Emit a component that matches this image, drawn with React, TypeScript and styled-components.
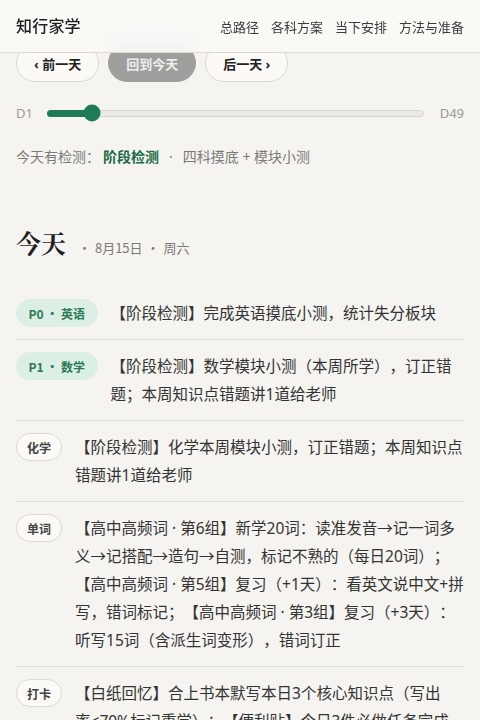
import React from 'react'
import styled, { createGlobalStyle } from 'styled-components'

const GlobalStyle = createGlobalStyle`
    * {
        box-sizing: border-box;
    }
    body {
        margin: 0;
        background: #f5f4f0;
        font-family: 'Noto Sans', 'Noto Sans CJK SC', sans-serif;
        color: #2b2b2b;
        text-spacing-trim: space-all;
    }
`

const NAV = ['总路径', '各科方案', '当下安排', '方法与准备']

type Task = {
    tag: string
    kind: 'priority' | 'plain'
    text: string
}

const TASKS: Task[] = [
    { tag: 'P0 · 英语', kind: 'priority', text: '【阶段检测】完成英语摸底小测，统计失分板块' },
    {
        tag: 'P1 · 数学',
        kind: 'priority',
        text: '【阶段检测】数学模块小测（本周所学），订正错题；本周知识点错题讲1道给老师',
    },
    { tag: '化学', kind: 'plain', text: '【阶段检测】化学本周模块小测，订正错题；本周知识点错题讲1道给老师' },
    {
        tag: '单词',
        kind: 'plain',
        text: '【高中高频词 · 第6组】新学20词：读准发音→记一词多义→记搭配→造句→自测，标记不熟的（每日20词）；【高中高频词 · 第5组】复习（+1天）：看英文说中文+拼写，错词标记；【高中高频词 · 第3组】复习（+3天）：听写15词（含派生词变形），错词订正',
    },
    {
        tag: '打卡',
        kind: 'plain',
        // word joiner keeps "率<70%" together, as in the original wrap
        text: '【白纸回忆】合上书本默写本日3个核心知识点（写出率\u2060<70%标记重学）；【便利贴】今日3件必做任务完成后打勾',
    },
]

const DAY = 7
const TOTAL = 49

export default function App(): JSX.Element {
    const progress = ((DAY - 1) / (TOTAL - 1)) * 100 - 0.8
    return (
        <>
            <GlobalStyle />
            <Header>
                <Logo>知行家学</Logo>
                <Nav>
                    {NAV.map((item) => (
                        <NavLink key={item}>{item}</NavLink>
                    ))}
                </Nav>
            </Header>
            <Main>
                <DayButtons>
                    <DayButton>‹ 前一天</DayButton>
                    <DayButton $active>回到今天</DayButton>
                    <DayButton>后一天 ›</DayButton>
                </DayButtons>
                <SliderRow>
                    <SliderLabel>D1</SliderLabel>
                    <Track>
                        <Fill style={{ width: `${progress}%` }} />
                        <Thumb style={{ left: `${progress}%` }} />
                    </Track>
                    <SliderLabel>D{TOTAL}</SliderLabel>
                </SliderRow>
                <Notice>
                    今天有检测：<strong>阶段检测</strong>
                    <Dot>·</Dot>四科摸底 + 模块小测
                </Notice>
                <TodayHeading>
                    <h2>今天</h2>
                    <span>· 8月15日 · 周六</span>
                </TodayHeading>
                <TaskList>
                    {TASKS.map((task) => (
                        <TaskRow key={task.tag}>
                            <Tag $kind={task.kind}>{task.tag}</Tag>
                            <TaskText>{task.text}</TaskText>
                        </TaskRow>
                    ))}
                </TaskList>
            </Main>
        </>
    )
}

const Header = styled.header`
    position: fixed;
    top: 0;
    left: 0;
    right: 0;
    z-index: 10;
    height: 53px;
    display: flex;
    align-items: center;
    justify-content: space-between;
    padding: 0 16px 2px;
    background: rgba(250, 249, 246, 0.92);
    backdrop-filter: blur(8px);
    border-bottom: 1px solid #dcd9d2;
`

const Logo = styled.div`
    font-size: 16px;
    font-weight: 500;
    color: #1d1d1d;
    letter-spacing: 0.2px;
`

const Nav = styled.nav`
    display: flex;
    gap: 12px;
    margin-top: 2px;
`

const NavLink = styled.a`
    font-size: 13px;
    color: #3b3b3b;
    cursor: pointer;
`

const Main = styled.main`
    padding: 44px 16px 40px;
`

const DayButtons = styled.div`
    display: flex;
    gap: 9px;
`

const DayButton = styled.button<{ $active?: boolean }>`
    height: 38px;
    padding: 0 17px;
    border-radius: 19px;
    border: 1px solid ${(p) => (p.$active ? '#9e9e9c' : '#dcd9d1')};
    background: ${(p) => (p.$active ? '#9e9e9c' : '#fbfaf7')};
    color: ${(p) => (p.$active ? '#eeeeec' : '#222')};
    font-family: inherit;
    font-size: 13px;
    font-weight: 700;
`

const SliderRow = styled.div`
    display: flex;
    align-items: center;
    gap: 14px;
    height: 20px;
    margin-top: 21px;
`

const SliderLabel = styled.span`
    font-size: 13px;
    color: #9a9a97;
    &:last-child {
        margin-left: 2px;
    }
`

const Track = styled.div`
    position: relative;
    flex: 1;
    height: 7px;
    border-radius: 4px;
    background: #eceae5;
    border: 1px solid #d9d6cf;
`

const Fill = styled.div`
    height: 7px;
    border-radius: 4px;
    background: #1f7a57;
    margin: -1px 0 0 -1px;
`

const Thumb = styled.div`
    position: absolute;
    top: 50%;
    width: 17px;
    height: 17px;
    border-radius: 50%;
    background: #1f7a57;
    transform: translate(-50%, -50%);
`

const Notice = styled.p`
    margin: 24px 0 0;
    font-size: 14px;
    line-height: 20px;
    color: #7a7a77;
    strong {
        margin-left: 3px;
        color: #1e6b48;
        font-weight: 700;
    }
`

const Dot = styled.span`
    margin: 0 10px;
    color: #7a7a77;
`

const TodayHeading = styled.div`
    display: flex;
    align-items: baseline;
    gap: 12px;
    margin-top: 58px;
    h2 {
        margin: 0;
        font-family: 'Noto Serif CJK SC', 'Noto Sans CJK SC', serif;
        font-size: 25px;
        line-height: 34px;
        font-weight: 700;
        color: #1f1f1f;
    }
    span {
        font-family: 'Noto Sans CJK SC', sans-serif;
        font-size: 13px;
        color: #7a7a77;
        word-spacing: 1px;
    }
`

const TaskList = styled.ul`
    list-style: none;
    margin: 28px 0 0;
    padding: 0;
`

const TaskRow = styled.li`
    display: flex;
    align-items: flex-start;
    gap: 13px;
    padding: 12px 0;
    border-bottom: 1px solid #e0ddd6;
`

const Tag = styled.span<{ $kind: 'priority' | 'plain' }>`
    flex-shrink: 0;
    height: 28px;
    display: inline-flex;
    align-items: center;
    padding: 0 ${(p) => (p.$kind === 'priority' ? '11.5px' : '10px')};
    border-radius: 14px;
    font-family: 'Noto Sans CJK SC', sans-serif;
    font-size: 12px;
    font-weight: 700;
    border: 1px solid ${(p) => (p.$kind === 'priority' ? '#dcefe5' : '#dcd9d1')};
    background: ${(p) => (p.$kind === 'priority' ? '#dcefe5' : '#fbfaf7')};
    color: ${(p) => (p.$kind === 'priority' ? '#2b7a56' : '#444')};
`

const TaskText = styled.p`
    margin: 0;
    flex: 1;
    font-size: 15.5px;
    line-height: 28px;
    color: #333;
`
